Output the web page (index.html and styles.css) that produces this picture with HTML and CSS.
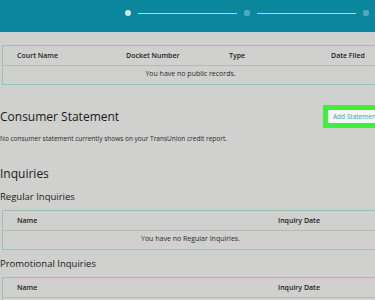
FILE: index.html
```html
<!DOCTYPE html>
<html>
<head>
<meta charset="utf-8">
<link rel="stylesheet" href="styles.css">
</head>
<body>
<div class="page">
  <header class="topbar">
    <div class="steps">
      <span class="dot dot-active"></span>
      <span class="line"></span>
      <span class="dot"></span>
      <span class="line"></span>
      <span class="dot"></span>
    </div>
  </header>

  <main class="content">
    <div class="table table-public">
      <div class="thead cols-public">
        <span>Court Name</span>
        <span>Docket Number</span>
        <span>Type</span>
        <span>Date Filed</span>
      </div>
      <div class="tbody">You have no public records.</div>
    </div>

    <section class="statement">
      <div class="statement-head">
        <h2 class="h-large">Consumer Statement</h2>
        <div class="btn-wrap"><button class="btn">Add Statement</button></div>
      </div>
      <p class="note">No consumer statement currently shows on your TransUnion credit report.</p>
    </section>

    <h2 class="h-large h-inquiries">Inquiries</h2>

    <h3 class="h-medium">Regular Inquiries</h3>
    <div class="table">
      <div class="thead cols-inq">
        <span>Name</span>
        <span>Inquiry Date</span>
      </div>
      <div class="tbody">You have no Regular Inquiries.</div>
    </div>

    <h3 class="h-medium h-promo">Promotional Inquiries</h3>
    <div class="table">
      <div class="thead cols-inq">
        <span>Name</span>
        <span>Inquiry Date</span>
      </div>
      <div class="tbody">You have no Promotional Inquiries.</div>
    </div>
  </main>
</div>
</body>
</html>
```

FILE: styles.css
```css
html, body {
  margin: 0;
  padding: 0;
  background: #d0d0cf;
  overflow: hidden;
}

body {
  font-family: "Open Sans", "Noto Sans", sans-serif;
  color: #1e1e1e;
}

.page {
  width: 390px;
}

.topbar {
  height: 32px;
  background: #0b879d;
  border-bottom: 2px solid #c9d3d5;
  display: flex;
  align-items: flex-start;
}

.steps {
  display: flex;
  align-items: center;
  padding-left: 125px;
  padding-top: 10px;
  gap: 7px;
}

.dot {
  width: 6px;
  height: 6px;
  border-radius: 2px;
  background: #4fa9be;
}

.dot-active {
  border-radius: 50%;
  background: #cde9f0;
}

.line {
  width: 99px;
  height: 1px;
  background: #a9dbe7;
}

.content {
  padding-top: 11px;
}

.table {
  margin-left: 2px;
  width: 390px;
  border: 1px solid #9fbdbc;
  box-sizing: border-box;
}

.thead {
  display: grid;
  height: 20px;
  box-sizing: border-box;
  align-items: center;
  padding-left: 14px;
  font-size: 7px;
  font-weight: 600;
  color: #222;
  border-bottom: 1px solid #b8b8b8;
}

.cols-public {
  grid-template-columns: 109px 103px 102px 1fr;
}

.cols-inq {
  grid-template-columns: 261px 1fr;
}

.tbody {
  height: 18px;
  line-height: 16px;
  width: 375px;
  text-align: center;
  font-size: 7px;
  color: #2a2a2a;
}

.statement {
  margin-top: 20px;
}

.statement-head {
  display: flex;
  justify-content: space-between;
  align-items: center;
  width: 388px;
}

.h-large {
  margin: 0;
  font-size: 12px;
  font-weight: 400;
  color: #1a1a1a;
}

.btn-wrap {
  background: #3ef03a;
  padding: 5px 0 5px 5px;
  width: 60px;
  height: 13px;
  overflow: hidden;
}

.btn {
  display: block;
  height: 13px;
  width: 100%;
  border: 0;
  background: #f4f7f7;
  color: #3e9fb0;
  font-family: inherit;
  font-size: 6.5px;
  padding: 0 0 0 5px;
  text-align: left;
  white-space: nowrap;
}

.note {
  margin: 6px 0 0;
  font-size: 6.5px;
  color: #2a2a2a;
}

.h-inquiries {
  margin-top: 22px;
}

.h-medium {
  margin: 8px 0 7px;
  font-size: 9.5px;
  font-weight: 400;
  color: #1a1a1a;
}

.h-promo {
  margin-top: 7px;
}
```
